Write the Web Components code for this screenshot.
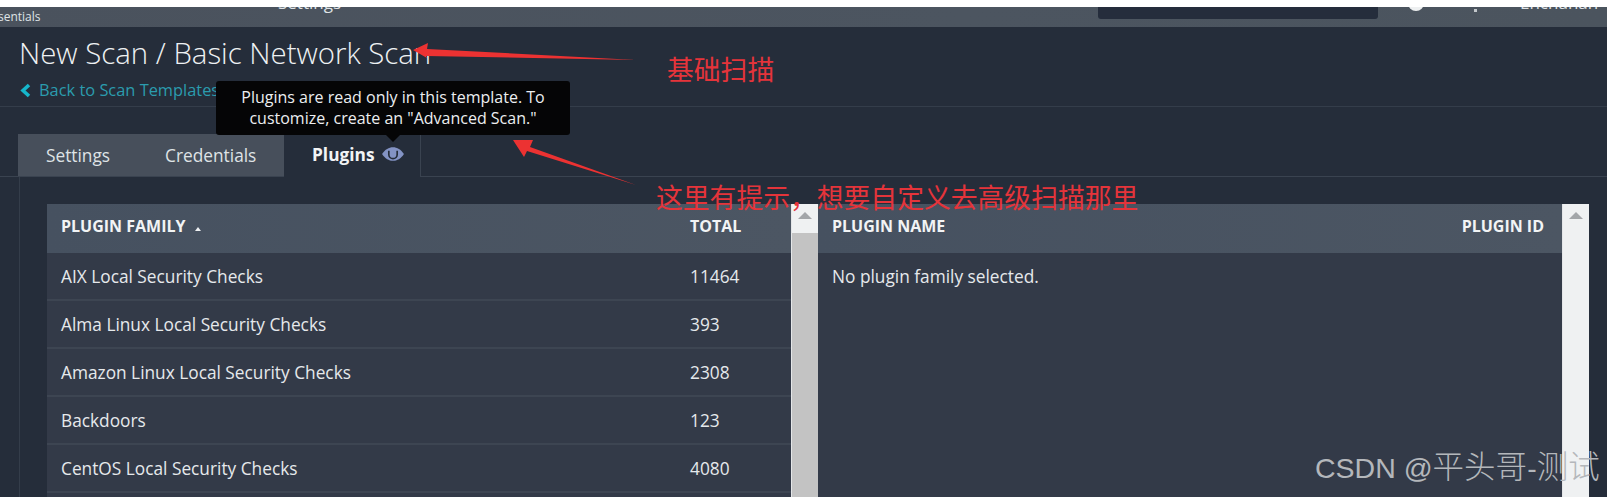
<!DOCTYPE html>
<html lang="zh">
<head>
<meta charset="utf-8">
<title>New Scan / Basic Network Scan</title>
<style>
    html, body { margin: 0; height: 497px; overflow: hidden; background: #fff; }
    body { padding-top: 7px; box-sizing: border-box; font-family: 'Open Sans', sans-serif; color: #e8ebee; }
</style>
</head>
<body>
<scan-page></scan-page>

<script>
class BaseElement extends HTMLElement {
    constructor() {
        super();
        this.attachShadow({ mode: 'open' });
    }
    render(css, html) {
        this.shadowRoot.innerHTML = `<style>${css}</style>${html}`;
    }
}

class ScanTopbar extends BaseElement {
    connectedCallback() {
        this.render(`
            :host { display: flex; height: 20px; overflow: hidden; background: linear-gradient(90deg, #4a525d, #4c5560 60%, #4b545e); font-size: 12px; color: #dfe3e6; }
            .crumb { margin: 2px 0 0 -2px; width: 280px; line-height: 16px; }
            .nav { margin: -15px 0 0 0; width: 820px; font-size: 17px; line-height: 22px; }
            .search { width: 280px; height: 12px; background: #252d3c; border-radius: 0 0 3px 3px; }
            .dot { width: 16px; height: 16px; margin: -12px 0 0 30px; border-radius: 50%; background: #eef0f1; flex: none; }
            .pip { width: 3px; height: 3px; margin: 2px 0 0 50px; background: #c3c8cc; flex: none; }
            .user { margin: -15px 0 0 43px; font-size: 17px; line-height: 22px; white-space: nowrap; }
        `, `
            <div class="crumb">sentials</div>
            <div class="nav">Settings</div>
            <div class="search"></div>
            <div class="dot"></div>
            <div class="pip"></div>
            <div class="user">Enchanan</div>
        `);
    }
}

class ScanHeader extends BaseElement {
    connectedCallback() {
        this.render(`
            :host { display: block; height: 79px; padding-left: 19px; border-bottom: 1px solid #343d4a; }
            h1 { margin: 0; padding-top: 6px; font-size: 29.400px; font-weight: 300; line-height: 40px; color: #eef1f3; white-space: nowrap; }
            a { display: flex; align-items: center; gap: 7px; margin-top: 6px; font-size: 16.400px; line-height: 22px; color: #2b9cae; white-space: nowrap; }
            svg { width: 13px; height: 15px; }
        `, `
            <h1>New Scan / Basic Network Scan</h1>
            <a><svg viewBox="0 0 13 15"><path d="M10 2 4 7.500l6 5.500" fill="none" stroke="#16b6cb" stroke-width="3.600"/></svg><span>Back to Scan Templates</span></a>
        `);
    }
}

class ScanTabs extends BaseElement {
    connectedCallback() {
        this.render(`
            :host { display: flex; height: 42px; margin-top: 27px; padding-left: 18px; border-bottom: 1px solid #3a4350; font-size: 17.300px; }
            .off { display: flex; align-items: center; width: 266px; height: 42px; box-sizing: border-box; padding: 1px 0 0 28px; gap: 55px; background: #474f5b; color: #dfe3e6; }
            .on { display: flex; align-items: center; gap: 7px; width: 137px; height: 43px; box-sizing: border-box; padding: 0 0 3px 28px; border-right: 1px solid #3a4350; background: #252d3a; font-weight: 700; color: #f2f4f5; }
            svg { width: 24px; height: 16px; }
        `, `
            <div class="off"><span>Settings</span><span>Credentials</span></div>
            <div class="on"><span>Plugins</span>
                <svg viewBox="0 0 23 15"><path d="M1 7.500C4 3 7.500 1 11.500 1S19 3 22 7.500C19 12 15.500 14 11.500 14S4 12 1 7.500Z" fill="#8393c4"/><path d="M7.500 4.500v3.500a4 4 0 0 0 8 0V4.500" fill="none" stroke="#252d3a" stroke-width="1.600"/></svg>
            </div>
        `);
    }
}

class FakeScrollbar extends BaseElement {
    connectedCallback() {
        const thumb = this.hasAttribute('thumb');
        this.render(`
            :host { display: flex; flex-direction: column; flex: none; width: 27px; background: ${thumb ? '#c3c3c3' : '#eff1f2'}; border-left: 1px solid #e4e6e8; box-sizing: border-box; }
            .up { display: flex; justify-content: center; padding-top: 8px; height: 21px; background: #eff1f2; }
            i { width: 0; height: 0; border: 7px solid transparent; border-top: 0; border-bottom: 7px solid #a3a6a9; }
        `, `<div class="up"><i></i></div>`);
    }
}

class PluginTable extends BaseElement {
    connectedCallback() {
        const rows = JSON.parse(this.getAttribute('rows') || '[]');
        const heads = this.getAttribute('heads').split('|');
        const body = rows.length
            ? rows.map(r => `<div class="row"><span>${r[0]}</span><span class="num">${r[1]}</span></div>`).join('')
            : `<div class="row empty"><span>${this.getAttribute('empty')}</span></div>`;
        const sort = this.hasAttribute('sorted') ? '<i></i>' : '';
        this.render(`
            :host { display: block; flex: none; width: var(--w); background: #333a48; font-size: 17.300px; color: #e6e9ec; }
            .head { display: flex; justify-content: space-between; align-items: center; height: 43px; padding: 0 var(--pr) 6px 14px; background: linear-gradient(90deg, #465160, #4c5663); font-size: 16px; font-weight: 700; color: #f2f4f5; }
            .head i { display: inline-block; margin: 0 0 1px 10px; border: 3px solid transparent; border-top: 0; border-bottom: 4px solid #eef0f2; }
            .head span:last-child { width: var(--last); }
            .row { display: flex; justify-content: space-between; align-items: center; height: 46px; padding: 0 var(--pr) 0 14px; border-bottom: 2px solid #3d4552; }
            .row.empty { border-bottom: 0; }
            .num { width: var(--last); }
        `, `<div class="head"><span>${heads[0]}${sort}</span><span>${heads[1]}</span></div>${body}`);
    }
}

class ScanTooltip extends BaseElement {
    connectedCallback() {
        this.render(`
            :host { position: absolute; left: 216px; top: 81px; width: 354px; height: 54px; box-sizing: border-box; padding-top: 6px; background: #050506; border-radius: 3px; font-size: 16px; line-height: 21px; text-align: center; color: #eceef0; }
            :host::after { content: ''; position: absolute; left: 170px; top: 54px; border: 7px solid transparent; border-bottom: 0; border-top: 7px solid #050506; }
        `, `Plugins are read only in this template. To<br>customize, create an "Advanced Scan."`);
    }
}

class RedNote extends BaseElement {
    connectedCallback() {
        this.render(`
            :host { position: absolute; left: var(--x); top: var(--y); font-family: 'Noto Sans CJK SC', sans-serif; font-size: var(--s); line-height: 1.2; color: var(--c, #e5343a); white-space: nowrap; }
        `, `<slot></slot>`);
    }
}

class ScanArrows extends BaseElement {
    connectedCallback() {
        this.render(`
            :host { position: absolute; left: 0; top: 0; width: 1607px; height: 497px; pointer-events: none; }
            svg { display: block; }
        `, `
            <svg width="1607" height="497" viewBox="0 0 1607 497">
                <polygon points="413,50 428,43 427,49 636,60 426,56 427,58" fill="#ec3232"/>
                <polygon points="513,140 533,140 530,147 636,185 527,151 524,157" fill="#ec3232"/>
            </svg>
        `);
    }
}

class ScanPage extends BaseElement {
    connectedCallback() {
        const families = [
            ['AIX Local Security Checks', '11464'],
            ['Alma Linux Local Security Checks', '393'],
            ['Amazon Linux Local Security Checks', '2308'],
            ['Backdoors', '123'],
            ['CentOS Local Security Checks', '4080']
        ];
        this.render(`
            :host { display: block; height: 490px; overflow: hidden; background: #252d3a; }
            .panel { display: flex; margin-left: 19px; padding: 27px 0 0 27px; height: 400px; border-left: 1px solid #343d4a; }
            .family { --w: 744px; --pr: 30px; --last: 71px; }
            .name { --w: 744px; --pr: 18px; --last: auto; }
        `, `
            <scan-topbar></scan-topbar>
            <scan-header></scan-header>
            <scan-tabs></scan-tabs>
            <div class="panel">
                <plugin-table class="family" heads="PLUGIN FAMILY|TOTAL" sorted rows='${JSON.stringify(families)}'></plugin-table>
                <fake-scrollbar thumb></fake-scrollbar>
                <plugin-table class="name" heads="PLUGIN NAME|PLUGIN ID" empty="No plugin family selected."></plugin-table>
                <fake-scrollbar></fake-scrollbar>
            </div>
            <scan-tooltip></scan-tooltip>
            <scan-arrows></scan-arrows>
            <red-note style="--x:667px;--y:53px;--s:26.800px">基础扫描</red-note>
            <red-note style="--x:656px;--y:181px;--s:26.800px">这里有提示，想要自定义去高级扫描那里</red-note>
            <red-note style="--x:1315px;--y:449px;--s:28.500px;--c:#b4b7bb;font-family:'Liberation Sans','Noto Sans CJK SC',sans-serif">CSDN @<span style="font-size:31.500px;font-weight:300">平头哥</span>-<span style="font-size:31.500px;font-weight:300">测试</span></red-note>
        `);
    }
}

customElements.define('scan-topbar', ScanTopbar);
customElements.define('scan-header', ScanHeader);
customElements.define('scan-tabs', ScanTabs);
customElements.define('fake-scrollbar', FakeScrollbar);
customElements.define('plugin-table', PluginTable);
customElements.define('scan-tooltip', ScanTooltip);
customElements.define('red-note', RedNote);
customElements.define('scan-arrows', ScanArrows);
customElements.define('scan-page', ScanPage);
</script>
</body>
</html>
